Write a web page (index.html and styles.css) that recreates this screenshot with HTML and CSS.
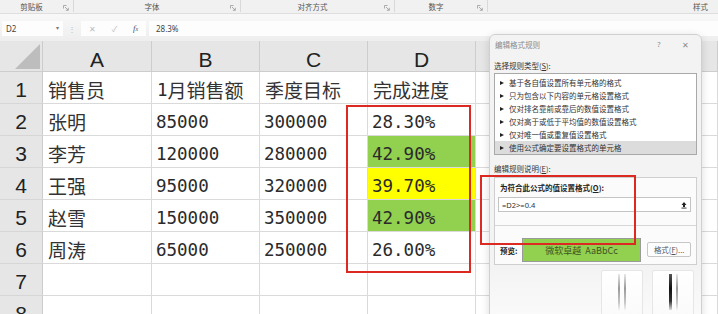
FILE: index.html
```html
<!DOCTYPE html>
<html lang="zh-CN">

<head>
    <meta charset="UTF-8">
    <title>编辑格式规则</title>
    <link rel="stylesheet" href="styles.css">
</head>

<body>
<div class="app">

    <!-- Ribbon group labels -->
    <div class="ribbon">
        <div class="group g-clip"><span>剪贴板</span><svg class="launch" viewBox="0 0 6 6"><path d="M0.5 3.5V0.5H3.5M2 2L5.2 5.2M2.8 5.3H5.3V2.8" /></svg></div>
        <div class="group g-font"><span>字体</span><svg class="launch" viewBox="0 0 6 6"><path d="M0.5 3.5V0.5H3.5M2 2L5.2 5.2M2.8 5.3H5.3V2.8" /></svg></div>
        <div class="group g-align"><span>对齐方式</span><svg class="launch" viewBox="0 0 6 6"><path d="M0.5 3.5V0.5H3.5M2 2L5.2 5.2M2.8 5.3H5.3V2.8" /></svg></div>
        <div class="group g-num"><span>数字</span><svg class="launch" viewBox="0 0 6 6"><path d="M0.5 3.5V0.5H3.5M2 2L5.2 5.2M2.8 5.3H5.3V2.8" /></svg></div>
        <div class="group g-style"><span>样式</span></div>
    </div>

    <!-- Formula bar -->
    <div class="formula-bar">
        <div class="name-box"><span>D2</span><span class="caret">▾</span></div>
        <div class="grip">⋮</div>
        <div class="fx-box"><span>✕</span><span>✓</span><span class="fx">f<small>x</small></span></div>
        <div class="formula">28.3%</div>
    </div>

    <!-- Sheet -->
    <div class="sheet">
        <div class="corner"></div>
        <div class="col-head">A</div>
        <div class="col-head">B</div>
        <div class="col-head">C</div>
        <div class="col-head">D</div>
        <div class="col-head"></div>

        <div class="row-head">1</div>
        <div class="cell">销售员</div>
        <div class="cell"><span class="num">1</span>月销售额</div>
        <div class="cell">季度目标</div>
        <div class="cell">完成进度</div>
        <div class="cell"></div>

        <div class="row-head">2</div>
        <div class="cell">张明</div>
        <div class="cell num">85000</div>
        <div class="cell num">300000</div>
        <div class="cell num">28.30%</div>
        <div class="cell"></div>

        <div class="row-head">3</div>
        <div class="cell">李芳</div>
        <div class="cell num">120000</div>
        <div class="cell num">280000</div>
        <div class="cell num green">42.90%</div>
        <div class="cell"></div>

        <div class="row-head">4</div>
        <div class="cell">王强</div>
        <div class="cell num">95000</div>
        <div class="cell num">320000</div>
        <div class="cell num yellow">39.70%</div>
        <div class="cell"></div>

        <div class="row-head">5</div>
        <div class="cell">赵雪</div>
        <div class="cell num">150000</div>
        <div class="cell num">350000</div>
        <div class="cell num green">42.90%</div>
        <div class="cell"></div>

        <div class="row-head">6</div>
        <div class="cell">周涛</div>
        <div class="cell num">65000</div>
        <div class="cell num">250000</div>
        <div class="cell num">26.00%</div>
        <div class="cell"></div>

        <div class="row-head">7</div>
        <div class="cell"></div>
        <div class="cell"></div>
        <div class="cell"></div>
        <div class="cell"></div>
        <div class="cell"></div>

        <div class="row-head">8</div>
        <div class="cell"></div>
        <div class="cell"></div>
        <div class="cell"></div>
        <div class="cell"></div>
        <div class="cell"></div>
    </div>

    <div class="mark mark-cells"></div>

    <!-- Edit formatting rule dialog -->
    <div class="dialog">
        <div class="dlg-title">
            <span>编辑格式规则</span>
            <span class="dlg-help">?</span>
            <span class="dlg-close">✕</span>
        </div>

        <div class="dlg-label">选择规则类型(<u>S</u>):</div>
        <div class="rule-list">
            <div class="rule">基于各自值设置所有单元格的格式</div>
            <div class="rule">只为包含以下内容的单元格设置格式</div>
            <div class="rule">仅对排名靠前或靠后的数值设置格式</div>
            <div class="rule">仅对高于或低于平均值的数值设置格式</div>
            <div class="rule">仅对唯一值或重复值设置格式</div>
            <div class="rule selected">使用公式确定要设置格式的单元格</div>
        </div>

        <div class="dlg-label label-edit">编辑规则说明(<u>E</u>):</div>
        <div class="panel">
            <div class="panel-title">为符合此公式的值设置格式(<u>O</u>):</div>
            <div class="formula-input">
                <span>=D2&gt;=0.4</span>
                <svg class="collapse" viewBox="0 0 8 8"><path d="M4 1L6.5 4H5V6H3V4H1.5Z" /><rect x="1.5" y="6.6" width="5" height="0.9" /></svg>
            </div>
            <div class="preview-row">
                <span class="preview-label">预览:</span>
                <div class="preview">微软卓越&nbsp; AaBbCc</div>
                <div class="btn-format">格式(<u>F</u>)...</div>
            </div>
        </div>

        <div class="dlg-buttons">
            <div class="dlg-btn"><i class="ghost light"></i><i class="ghost light"></i></div>
            <div class="dlg-btn"><i class="ghost dark"></i><i class="ghost light"></i></div>
        </div>
    </div>

    <div class="mark mark-formula"></div>

</div>
</body>

</html>
```

FILE: styles.css
```css
* {
    box-sizing: border-box;
}

body {
    margin: 0;
    background: #fff;
    font-family: "Noto Sans CJK SC", "Noto Sans", sans-serif;
    color: #222;
    overflow: hidden;
}

.app {
    position: relative;
    width: 718px;
    height: 314px;
    overflow: hidden;
}

/* ribbon */
.ribbon {
    display: flex;
    height: 14px;
    background: #f1f1f1;
    border-bottom: 1px solid #dedede;
    font-size: 7.5px;
    color: #555;
}

.group {
    display: flex;
    align-items: center;
    border-right: 1px solid #d9d9d9;
    padding-right: 4px;
    height: 12px;
}

.group span {
    flex: 1;
    text-align: center;
}

.g-clip { width: 74px; }
.g-font { width: 167px; }
.g-align { width: 154px; }
.g-num { width: 93px; }

.g-style {
    flex: 1;
    border-right: none;
}

.g-style span {
    text-align: right;
    padding-right: 6px;
}

.launch {
    width: 6px;
    height: 6px;
    margin-top: 3px;
}

.launch path {
    fill: none;
    stroke: #999;
    stroke-width: 0.8;
}

/* formula bar */
.formula-bar {
    display: flex;
    align-items: center;
    height: 27px;
    padding: 6px 0 5px 2px;
    background: linear-gradient(#f8f8f8, #eeeeee);
    font-size: 8px;
    color: #444;
}

.name-box {
    display: flex;
    align-items: center;
    justify-content: space-between;
    width: 61px;
    height: 15px;
    background: #fdfdfd;
    padding: 0 4px;
    font-family: "Noto Sans", sans-serif;
}

.caret {
    font-size: 6px;
    color: #777;
}

.grip {
    width: 18px;
    text-align: center;
    color: #bbb;
    font-size: 8px;
}

.fx-box {
    display: flex;
    align-items: center;
    justify-content: space-around;
    width: 65px;
    height: 15px;
    background: #fdfdfd;
    color: #bbb;
    font-size: 8px;
}

.fx-box .fx {
    font-family: "Liberation Serif", serif;
    font-style: italic;
    color: #555;
    font-size: 9px;
}

.fx small {
    font-size: 6px;
}

.formula {
    flex: 1;
    height: 15px;
    margin-left: 3px;
    background: #fdfdfd;
    padding: 2px 7px;
    font-family: "Noto Sans", sans-serif;
    line-height: 11px;
}

/* sheet */
.sheet {
    display: grid;
    grid-template-columns: 43px 109px 108px 108px 108px 1fr;
    grid-template-rows: 31px;
    grid-auto-rows: 32px;
}

.corner,
.col-head,
.row-head {
    background: #e6e6e6;
    border-right: 1px solid #cdcdcd;
    border-bottom: 1px solid #cdcdcd;
}

.corner {
    position: relative;
}

.corner::after {
    content: "";
    position: absolute;
    right: 2px;
    bottom: 2px;
    width: 25px;
    height: 25px;
    background: #bdbdbd;
    clip-path: polygon(100% 0, 100% 100%, 0 100%);
}

.col-head {
    display: flex;
    align-items: center;
    justify-content: center;
    padding-top: 7px;
    font-family: "Liberation Sans", sans-serif;
    font-size: 21px;
    color: #222;
}

.row-head {
    display: flex;
    align-items: center;
    justify-content: center;
    padding-top: 4px;
    font-family: "Liberation Sans", sans-serif;
    font-size: 21px;
    color: #222;
    border-bottom-color: #d6d6d6;
}

.cell {
    display: flex;
    align-items: center;
    padding: 4px 0 0 5px;
    border-right: 1px solid #dadada;
    border-bottom: 1px solid #dadada;
    font-size: 19px;
    color: #333;
    white-space: nowrap;
}

.num {
    font-family: "DejaVu Sans Mono", monospace;
    font-size: 17.5px;
    padding-left: 4px;
    color: #2a2a2a;
}

.cell .num {
    padding-left: 0;
}

.green {
    background: #92d050;
}

.yellow {
    background: #ffff00;
}

/* red annotation frames */
.mark {
    position: absolute;
    border: 2px solid #dc2a22;
}

.mark-cells {
    left: 346px;
    top: 105px;
    width: 125px;
    height: 168px;
}

.mark-formula {
    left: 480px;
    top: 175px;
    width: 156px;
    height: 70px;
}

/* dialog */
.dialog {
    position: absolute;
    left: 489px;
    top: 34px;
    width: 213px;
    height: 290px;
    display: flex;
    flex-direction: column;
    padding: 0 4px;
    background: linear-gradient(#f3f3f3 0, #f3f3f3 232px, #f6f6f6 250px, #fbfbfb 290px);
    border: 1px solid #d0d0d0;
    border-radius: 6px 6px 0 0;
    box-shadow: 0 2px 8px rgba(0, 0, 0, 0.14);
    font-size: 7.5px;
    color: #333;
}

.dlg-title {
    display: flex;
    align-items: center;
    height: 18px;
    padding-left: 1px;
    color: #8a8a8a;
}

.dlg-title span:first-child {
    flex: 1;
}

.dlg-help {
    font-family: "Noto Sans", sans-serif;
    width: 28px;
    text-align: center;
}

.dlg-close {
    width: 24px;
    text-align: center;
    font-size: 8px;
}

.dlg-label {
    height: 20px;
    padding-top: 8px;
    line-height: 10px;
}

.label-edit {
    height: 22px;
    padding-top: 9px;
}

.rule-list {
    height: 82px;
    padding: 2px 0;
    background: #fff;
    border: 1px solid #a9a9a9;
}

.rule {
    display: flex;
    align-items: center;
    height: 13px;
    padding-left: 5px;
    color: #333;
}

.rule::before {
    content: "";
    width: 0;
    height: 0;
    margin-right: 5px;
    border-left: 4px solid #222;
    border-top: 2.5px solid transparent;
    border-bottom: 2.5px solid transparent;
}

.rule.selected {
    background: #dcdcdc;
}

.panel {
    height: 88px;
    background: #fbfbfb;
    border: 1px solid #cfcfcf;
    display: flex;
    flex-direction: column;
}

.panel-title {
    height: 19px;
    padding: 5px 0 0 5px;
    line-height: 10px;
    font-weight: bold;
    color: #222;
}

.formula-input {
    display: flex;
    align-items: center;
    justify-content: space-between;
    height: 15px;
    margin: 0 5px 0 3px;
    padding: 0 2px 0 3px;
    background: #fff;
    border: 1px solid #c4c4c4;
    font-family: "Noto Sans", sans-serif;
    color: #333;
}

.collapse {
    width: 8px;
    height: 8px;
}

.collapse path,
.collapse rect {
    fill: #222;
}

.preview-row {
    display: flex;
    align-items: flex-start;
    margin-top: 13px;
    border-top: 1px solid #d6d6d6;
    flex: 1;
    padding: 12px 5px 0 5px;
}

.preview-label {
    width: 22px;
    margin-top: 7px;
    font-weight: bold;
    color: #222;
}

.preview {
    width: 120px;
    height: 24px;
    display: flex;
    align-items: center;
    justify-content: center;
    background: #92d050;
    border: 1px solid #9a9a9a;
    font-size: 9px;
    color: #3e5420;
}

.btn-format {
    width: 44px;
    height: 15px;
    margin: 4px 0 0 6px;
    background: #fdfdfd;
    border: 1px solid #c6c6c6;
    border-radius: 2px;
    text-align: center;
    line-height: 13px;
    color: #555;
}

.dlg-buttons {
    display: flex;
    justify-content: flex-end;
    gap: 9px;
    margin: 5px 3px 0 0;
}

.dlg-btn {
    display: flex;
    justify-content: center;
    gap: 4px;
    width: 42px;
    height: 50px;
    padding-top: 3px;
    background: linear-gradient(#ffffff, #fafafa);
    border: 1px solid #e6e6e6;
    border-radius: 2px;
}

.ghost {
    width: 2px;
    height: 36px;
}

.ghost.light {
    background: linear-gradient(#e8e8e8, #9a9a9a 40%, #c8c8c8 80%, #f4f4f4);
}

.ghost.dark {
    width: 3px;
    background: linear-gradient(#555, #111 40%, #333 75%, #ddd);
}
```
